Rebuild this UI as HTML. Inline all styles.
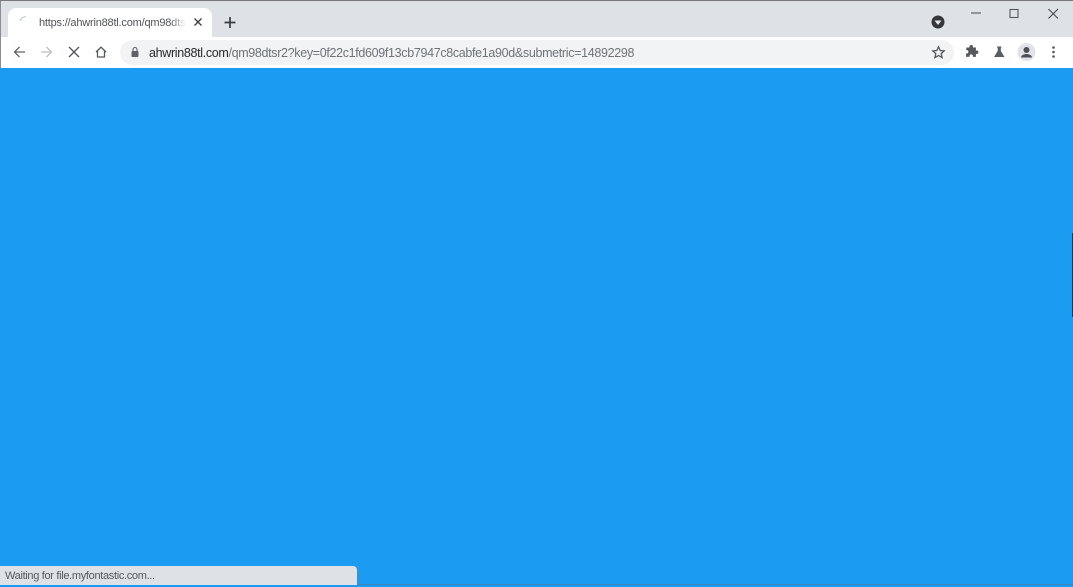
<!DOCTYPE html>
<html>
<head>
<meta charset="utf-8">
<style>
html,body{margin:0;padding:0;width:1073px;height:585px;overflow:hidden;background:#1c9bf3;font-family:"Liberation Sans",sans-serif}
.a{position:absolute}
#top{left:0;top:0;width:1073px;height:37px;background:#dee1e6;border-top:1px solid #777;box-sizing:border-box}
#bar{left:0;top:37px;width:1073px;height:31px;background:#fff}
#tab{left:8px;top:8px;width:204px;height:29px;background:#fff;border-radius:8px 8px 0 0}
#tabt{left:39px;top:16px;width:147px;height:14px;font-size:11px;line-height:14px;color:#505357;white-space:nowrap;overflow:hidden;letter-spacing:-.2px}
#fade{left:170px;top:14px;width:16px;height:17px;background:linear-gradient(90deg,rgba(255,255,255,0),#fff)}
#omni{left:120px;top:40px;width:834px;height:25px;background:#f1f3f4;border-radius:13px}
#url{left:149px;top:45px;font-size:12.5px;line-height:17px;color:#6f7377;white-space:nowrap;letter-spacing:-.33px}
#url b{font-weight:normal;color:#26282b}
#page{left:0;top:68px;width:1073px;height:517px;background:#1c9bf3}
#left{left:0;top:1px;width:1px;height:67px;background:#8a8d90}
#right{left:1072px;top:233px;width:1px;height:84px;background:#123a5c}
#bot{left:357px;top:584px;width:716px;height:1px;background:#3f86b8}
#st{left:0;top:566px;width:357px;height:19px;background:#dee1e6;border-radius:0 4px 0 0;font-size:11px;line-height:21px;color:#55585c;text-indent:5px;letter-spacing:-.32px}
svg{position:absolute;left:0;top:0}
</style>
</head>
<body>
<div class="a" id="page"></div>
<div class="a" id="right"></div>
<div class="a" id="bot"></div>
<div class="a" id="top"></div>
<div class="a" id="bar"></div>
<div class="a" id="left"></div>
<div class="a" id="tab"></div>
<div class="a" id="tabt">https://ahwrin88tl.com/qm98dtsr2?key</div>
<div class="a" id="fade"></div>
<div class="a" id="omni"></div>
<div class="a" id="url"><b>ahwrin88tl.com</b>/qm98dtsr2?key=0f22c1fd609f13cb7947c8cabfe1a90d&amp;submetric=14892298</div>
<div class="a" id="st">Waiting for file.myfontastic.com...</div>
<svg width="1073" height="68" viewBox="0 0 1073 68" fill="none">
  <path d="M20 21 A7 7 0 0 1 26 16.500" stroke="#c3d0e0" stroke-width="1.300"/>
  <path d="M194.500 18.500l7 7M201.500 18.500l-7 7" stroke="#3a3c40" stroke-width="1.300"/>
  <path d="M230 17v11M224.500 22.500h11" stroke="#3a3c40" stroke-width="1.700"/>
  <circle cx="938" cy="22" r="6.500" fill="#35373b"/>
  <path d="M934.500 20.500h7L938 25z" fill="#e8eaed"/>
  <path d="M971 13h10" stroke="#55585c" stroke-width="1.100"/>
  <rect x="1010" y="9.500" width="8" height="8" stroke="#55585c" stroke-width="1.100"/>
  <path d="M1048.500 9l9.500 9.500M1058 9l-9.500 9.500" stroke="#45484c" stroke-width="1.100"/>
  <path d="M25 52H14.500M19.500 47l-5 5 5 5" stroke="#5f6266" stroke-width="1.300"/>
  <path d="M41 52h10.500M46.500 47l5 5-5 5" stroke="#bcbfc3" stroke-width="1.300"/>
  <path d="M69 47l10 10M79 47L69 57" stroke="#55585c" stroke-width="1.400"/>
  <path d="M96 52l5-4.800 5 4.800M97.500 51v6h7v-6" stroke="#55585c" stroke-width="1.300"/>
  <rect x="131.500" y="51" width="7" height="6" rx="1" fill="#5f6266"/>
  <path d="M133 51v-1.500a2 2 0 0 1 4 0V51" stroke="#5f6266" stroke-width="1.100"/>
  <path d="M938.500 46.800l1.700 3.700 4 .4-3 2.700.9 4-3.600-2.100-3.600 2.100.9-4-3-2.700 4-.4z" stroke="#55585c" stroke-width="1.300"/>
  <path d="M966.500 49.500h3v-.8a1.700 1.700 0 0 1 3.400 0v.8h3v3h.8a1.700 1.700 0 0 1 0 3.400h-.8v3h-3v-.8a1.700 1.700 0 0 0-3.400 0v.8h-3.400v-3.400h.6a1.700 1.700 0 0 0 0-3.400h-.6z" fill="#55585c" transform="translate(0 -2)"/>
  <path d="M997 46.500h4.500v1h-.7v3.500l3.700 6h-10.500l3.700-6v-3.500H997z" fill="#5a5d61"/>
  <circle cx="1026.500" cy="52" r="9" fill="#e0e3e8"/>
  <circle cx="1026.500" cy="50" r="3" fill="#4d5156"/>
  <path d="M1021 57.500c0-2.200 3.300-3.500 5.500-3.500s5.500 1.300 5.500 3.500z" fill="#4d5156"/>
  <circle cx="1053.500" cy="47.500" r="1.300" fill="#55585c"/>
  <circle cx="1053.500" cy="52" r="1.300" fill="#55585c"/>
  <circle cx="1053.500" cy="56.500" r="1.300" fill="#55585c"/>
</svg>
</body>
</html>
